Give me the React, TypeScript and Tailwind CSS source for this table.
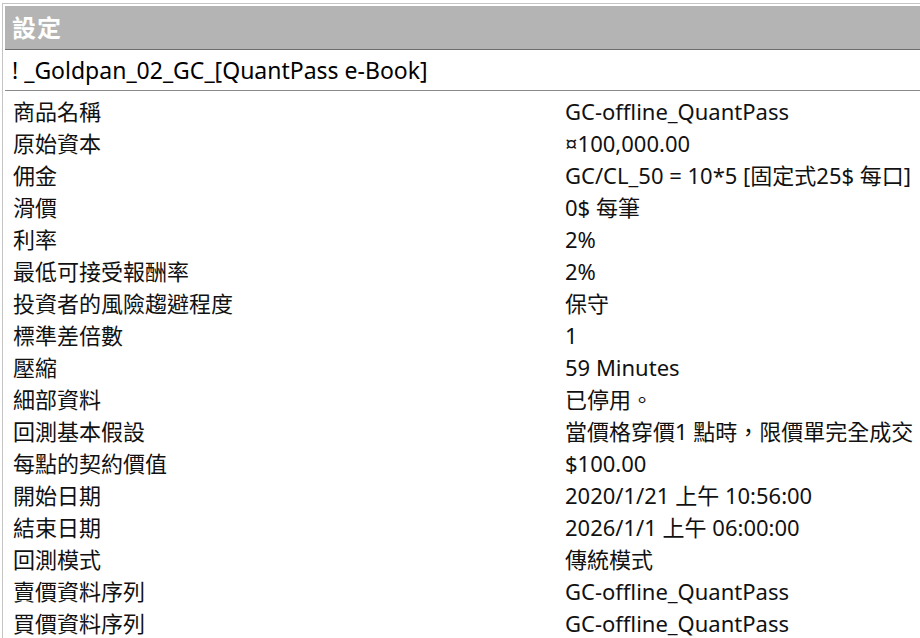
import React from "react";

const rows: [string, string][] = [
  ["商品名稱", "GC-offline_QuantPass"],
  ["原始資本", "¤100,000.00"],
  ["佣金", "GC/CL_50 = 10*5 [固定式25$ 每口]"],
  ["滑價", "0$ 每筆"],
  ["利率", "2%"],
  ["最低可接受報酬率", "2%"],
  ["投資者的風險趨避程度", "保守"],
  ["標準差倍數", "1"],
  ["壓縮", "59 Minutes"],
  ["細部資料", "已停用。"],
  ["回測基本假設", "當價格穿價1 點時，限價單完全成交"],
  ["每點的契約價值", "$100.00"],
  ["開始日期", "2020/1/21 上午 10:56:00"],
  ["結束日期", "2026/1/1 上午 06:00:00"],
  ["回測模式", "傳統模式"],
  ["賣價資料序列", "GC-offline_QuantPass"],
  ["買價資料序列", "GC-offline_QuantPass"],
];

export default function App() {
  return (
    <div
      className="w-[920px] h-[638px] overflow-hidden bg-white pl-[2px] pt-[3px]"
      style={{ fontFamily: '"Noto Sans", "Noto Sans CJK TC", sans-serif' }}
    >
      <div className="h-full border-l border-t border-[#c4c4c4] pl-[2px] pt-[2px]">
        <div className="h-[44px] bg-[#b4b4b4] border-b border-[#6e6e6e] flex items-center pl-[7px]">
          <span className="text-white font-bold text-[24px] leading-none tracking-[1px]">設定</span>
        </div>
        <div className="h-[41px] border-b border-[#8a8a8a] flex items-center pl-[7px]">
          <span className="text-black text-[23px] leading-none">! _Goldpan_02_GC_[QuantPass e-Book]</span>
        </div>
        <div className="pt-[4px]">
          {rows.map(([k, v], i) => (
            <div key={i} className="h-[32px] flex items-center text-[22px] text-[#111] leading-none whitespace-nowrap">
              <div className="w-[560px] pl-[8px]">{k}</div>
              <div>{v}</div>
            </div>
          ))}
        </div>
      </div>
    </div>
  );
}
